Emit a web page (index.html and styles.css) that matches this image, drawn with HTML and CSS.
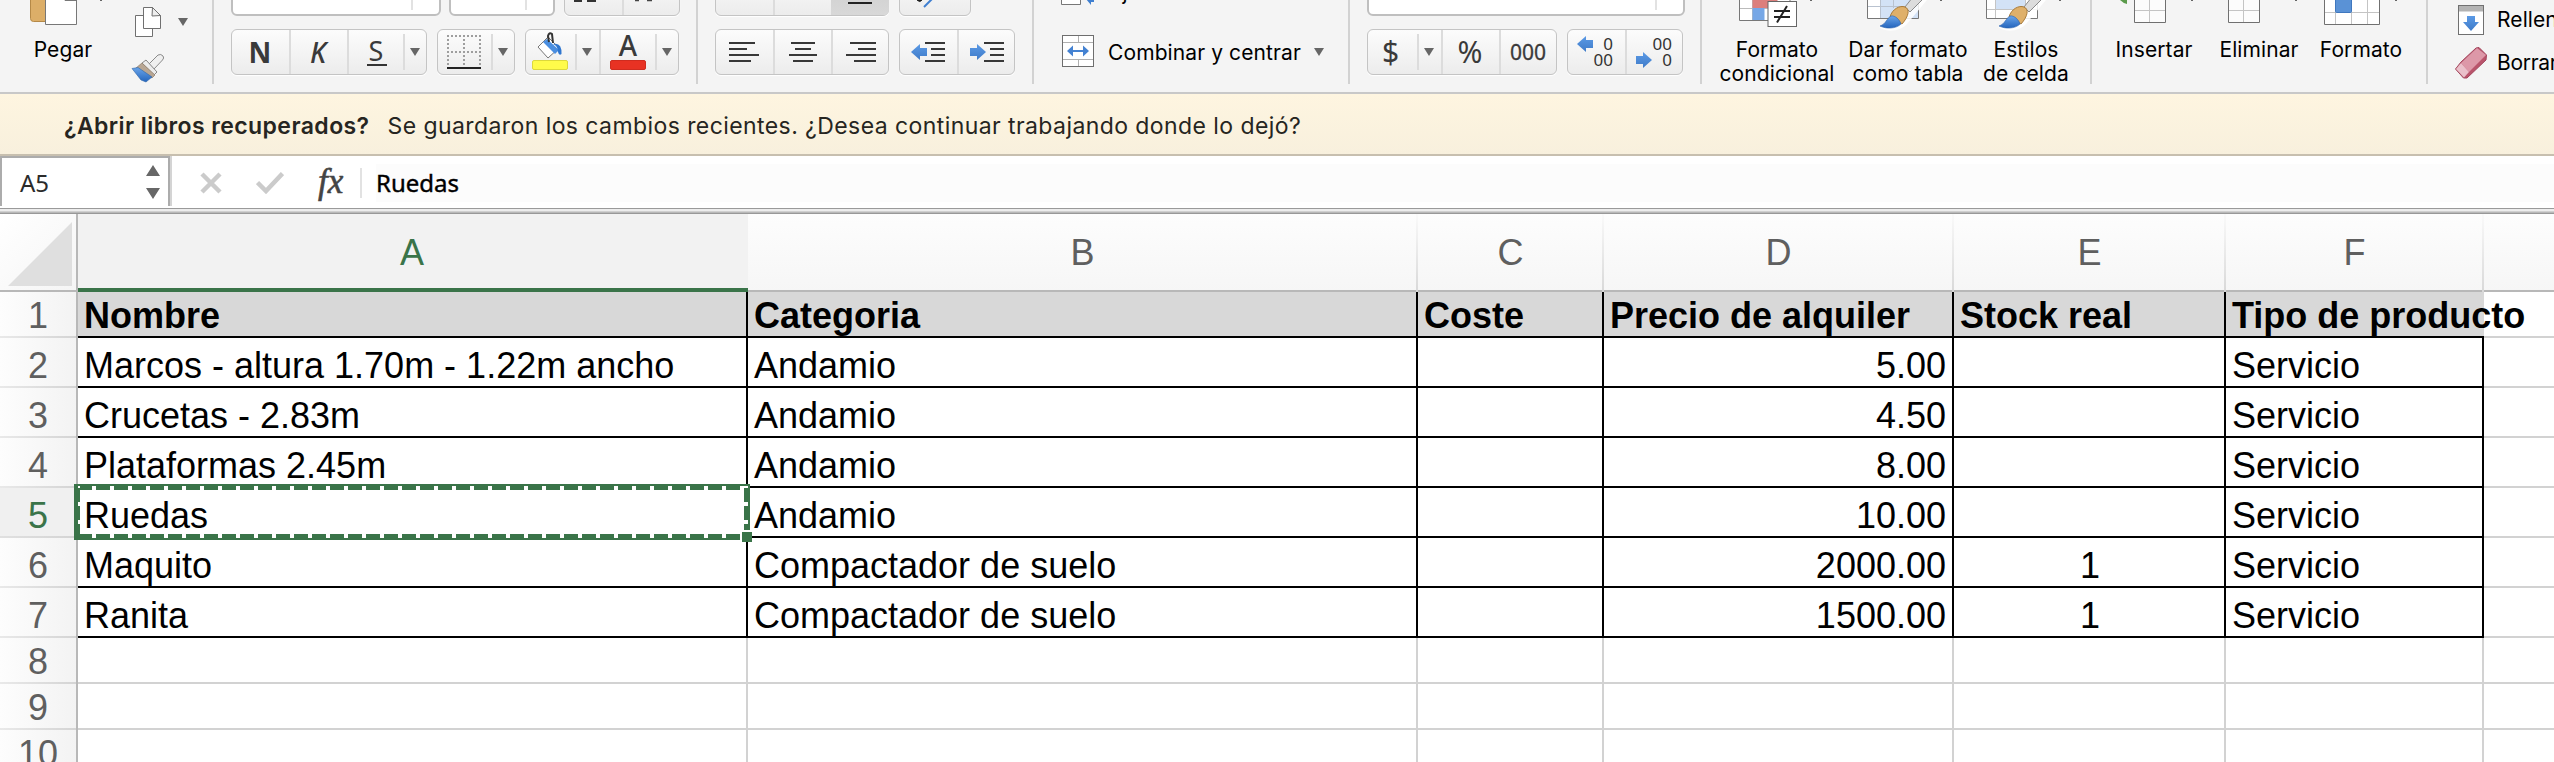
FILE: index.html
```html
<!DOCTYPE html>
<html lang="es">
<head>
<meta charset="utf-8">
<title>Inventario</title>
<link rel="stylesheet" href="styles.css">
</head>
<body>
<svg class="defs" width="0" height="0">
  <defs>
    <linearGradient id="tip" x1="0" y1="0" x2="0" y2="1"><stop offset="0" stop-color="#6aa5ea"/><stop offset="1" stop-color="#2465bd"/></linearGradient>
    <linearGradient id="arrow" x1="0" y1="0" x2="0" y2="1"><stop offset="0" stop-color="#5b9ae6"/><stop offset="1" stop-color="#3f7bc8"/></linearGradient>
    <g id="paint">
      <path d="M12 22 L44 -12 L52 -6 L27 24 C22 30 8 34 -1 27 Z" fill="#fff" opacity=".85"/>
      <path d="M25 7 L40 -12 L48 -6 L30 12 Z" fill="#dcdcdc" stroke="#8a8a8a" stroke-width="1"/>
      <path d="M10 17 C12 9 20 5 25 7 C30 9 29 16 22 24 Z" fill="#dfb06a" stroke="#a97b3a" stroke-width="1"/>
      <path d="M0 26 C6 24 7 18 11 16 C15 15 20 20 21 24 C16 29 6 29 0 26 Z" fill="url(#tip)" stroke="#2a62ad" stroke-width=".6"/>
    </g>
  </defs>
</svg>

<header class="ribbon">
  <section class="group group-clipboard">
    <div class="tall paste">
      <svg width="90" height="38" viewBox="18 0 90 38">
        <path d="M30.500 -6 H50 V21.500 H33.500 Q30.500 21.500 30.500 18.500 Z" fill="#dcae68" stroke="#b58947"/>
        <path d="M45.500 -6 H76.500 V24.500 H45.500 Z" fill="#fff" stroke="#777"/>
        <path d="M63 -2 L65 .5 H76.500" fill="none" stroke="#777"/>
        <path d="M100 0 h2 v1 h-2 z" fill="#666"/>
      </svg>
      <span class="label">Pegar</span>
    </div>
    <div class="clip-tools">
      <div class="clip-row">
        <svg width="28" height="32" viewBox="134 6 28 32">
          <path d="M135.500 15.500 H152.500 V36.500 H135.500 Z" fill="#fff" stroke="#707070"/>
          <path d="M143.500 7.500 H152.500 L160.500 15.500 V28.500 H143.500 Z" fill="#fff" stroke="#707070"/>
          <path d="M152.500 7.500 L152 16 L160.500 15.500 Z" fill="#eee" stroke="#707070"/>
        </svg>
        <svg class="caret" width="10" height="8" viewBox="0 0 10 8"><path d="M0 0H10L5 8Z"/></svg>
      </div>
      <svg width="34" height="30" viewBox="131 53 34 30">
        <path d="M149 64 L158 55 Q161 53.500 163 56 Q164.500 58 162.500 60 L154 69 Z" fill="#efefef" stroke="#8a8a8a"/>
        <path d="M146 60 L157 72 L154 75 L142 63 Z" fill="#ececec" stroke="#888"/>
        <path d="M142 63 L155 75 L152 78 L136 68 Z" fill="#b8a693" stroke="#8d7d6b" stroke-width=".7"/>
        <path d="M132 68.500 L138 67.500 L152 77 L146 82 L141 80 Z" fill="url(#tip)" stroke="#2e65a8" stroke-width=".6"/>
      </svg>
    </div>
  </section>

  <section class="group group-font">
    <div class="stack">
      <div class="row">
        <div class="combo w210"><i class="split at180"></i></div>
        <div class="combo w106 ml8"><i class="split at76"></i></div>
        <div class="seg ml9">
          <span class="btn w58"><svg width="56" height="44" viewBox="564 -29 56 44"><path d="M573 1 h8 M586 1 h9" stroke="#333" stroke-width="2"/></svg></span>
          <span class="btn w58"><svg width="56" height="44" viewBox="622 -29 56 44"><path d="M633 .5 h4 M645 .5 h5" stroke="#444" stroke-width="1.500"/></svg></span>
        </div>
      </div>
      <div class="row">
        <div class="seg">
          <span class="btn w58 glyph bold">N</span>
          <span class="btn w58 glyph italic">K</span>
          <span class="btn w56 glyph under">S</span>
          <span class="btn w24 drop"><svg class="caret" width="10" height="8" viewBox="0 0 10 8"><path d="M0 0H10L5 8Z"/></svg></span>
        </div>
        <div class="seg ml10">
          <span class="btn w54"><svg width="36" height="36" viewBox="448 34 36 36">
            <g fill="none" stroke="#9e9e9e" stroke-width="2" stroke-dasharray="2 2"><path d="M449 36 H483"/><path d="M449 52 H483"/><path d="M450 35 V66"/><path d="M466 35 V66"/><path d="M482 35 V66"/></g>
            <path d="M449 68 H483" stroke="#222" stroke-width="2"/></svg></span>
          <span class="btn w24 drop"><svg class="caret" width="10" height="8" viewBox="0 0 10 8"><path d="M0 0H10L5 8Z"/></svg></span>
        </div>
        <div class="seg ml10">
          <span class="btn w50"><svg width="40" height="42" viewBox="528 31 40 42">
            <path d="M536 47 L546 37 L557 48 L546 58 Z" fill="#fff" stroke="#777"/>
            <path d="M541 42 L545 39 L557 50 L553 54 Z" fill="#4a8ee0"/>
            <path d="M551 44 Q560 42 559.500 54 Q557 56 556 52 Q556 46 551 44Z" fill="#2f76cf"/>
            <path d="M547 42 L546 36 Q547 32 550 34 L551 43" fill="none" stroke="#333" stroke-width="2"/>
            <rect x="530.500" y="60.500" width="35" height="9" rx="1.500" fill="#fffb4a" stroke="#dcd83c"/></svg></span>
          <span class="btn w24 drop"><svg class="caret" width="10" height="8" viewBox="0 0 10 8"><path d="M0 0H10L5 8Z"/></svg></span>
          <span class="btn w56 fontcolor"><b>A</b><i></i></span>
          <span class="btn w24 drop"><svg class="caret" width="10" height="8" viewBox="0 0 10 8"><path d="M0 0H10L5 8Z"/></svg></span>
        </div>
      </div>
    </div>
  </section>

  <section class="group group-align">
    <div class="stack">
      <div class="row">
        <div class="seg"><span class="btn w58"></span><span class="btn w58"></span><span class="btn w58 pressed"><i></i></span></div>
        <div class="seg ml10"><span class="btn w72"><svg width="70" height="44" viewBox="900 -29 70 44"><path d="M917 0 q3 3 5 0z" fill="#222" stroke="#222"/><path d="M924 7 L933 -2" stroke="#3f7fd0" stroke-width="2"/></svg></span></div>
      </div>
      <div class="row">
        <div class="seg">
          <span class="btn w58"><svg width="30" height="22" viewBox="730 41 30 22"><path d="M730 43h26M730 49h18M730 55h30M730 61h22" stroke="#383838" stroke-width="2"/></svg></span>
          <span class="btn w58"><svg width="28" height="22" viewBox="788 41 28 22"><path d="M790 43h24M794 49h16M788 55h28M792 61h20" stroke="#383838" stroke-width="2"/></svg></span>
          <span class="btn w58"><svg width="30" height="22" viewBox="844 41 30 22"><path d="M848 43h26M856 49h18M844 55h30M852 61h22" stroke="#383838" stroke-width="2"/></svg></span>
        </div>
        <div class="seg ml10">
          <span class="btn w58"><svg width="34" height="22" viewBox="910 41 34 22"><path d="M910 52l9-8v4h7v8h-7v4z" fill="url(#arrow)"/><path d="M924 43h20M930 49h14M930 55h14M924 61h20" stroke="#383838" stroke-width="2"/></svg></span>
          <span class="btn w58"><svg width="34" height="22" viewBox="968 41 34 22"><path d="M984 52l-9-8v4h-7v8h7v4z" fill="url(#arrow)"/><path d="M982 43h20M988 49h14M988 55h14M982 61h20" stroke="#383838" stroke-width="2"/></svg></span>
        </div>
      </div>
    </div>
  </section>

  <section class="group group-merge">
    <div class="stack">
      <div class="row">
        <svg width="40" height="46" viewBox="1061 -30 40 46"><path d="M1061.500 -20H1080.500V4.500H1061.500Z" fill="#fff" stroke="#777"/><path d="M1086 -1 L1091 5 V2 H1094 V-2 H1091Z" fill="#3f7fd0"/></svg>
        <span class="label wrap">Ajustar texto</span>
      </div>
      <div class="row">
        <svg class="merge-icon" width="32" height="32" viewBox="0 0 32 32"><rect x=".5" y=".5" width="31" height="31" fill="#fff" stroke="#6e6e6e"/><path d="M1 7.500H31M1 24.500H31M16.500 1V7M16.500 25V31" stroke="#b0b0b0" fill="none"/><path d="M5 16l6-5.500v4.500h10v-4.500l6 5.500-6 5.500v-4.500h-10v4.500z" fill="#4482d2"/></svg>
        <span class="label merge-label">Combinar y centrar</span>
        <svg class="caret" width="10" height="8" viewBox="0 0 10 8"><path d="M0 0H10L5 8Z"/></svg>
      </div>
    </div>
  </section>

  <section class="group group-number">
    <div class="stack">
      <div class="row"><div class="combo w318"><i class="split at288"></i></div></div>
      <div class="row">
        <div class="seg">
          <span class="btn w50 glyph money">$</span>
          <span class="btn w24 drop"><svg class="caret" width="10" height="8" viewBox="0 0 10 8"><path d="M0 0H10L5 8Z"/></svg></span>
          <span class="btn w58 glyph pct">%</span>
          <span class="btn w58 glyph zeros">000</span>
        </div>
        <div class="seg ml10">
          <span class="btn w58 decimals"><svg width="16" height="16" viewBox="0 0 16 16"><path d="M0 8l9-8v4h7v8h-7v4z" fill="url(#arrow)"/></svg><em>0</em><em class="wide">00</em></span>
          <span class="btn w58 decimals"><em class="wide">00</em><svg width="16" height="16" viewBox="0 0 16 16"><path d="M16 8l-9-8v4h-7v8h7v4z" fill="url(#arrow)"/></svg><em>0</em></span>
        </div>
      </div>
    </div>
  </section>

  <section class="group group-styles">
    <div class="tall w124">
      <svg width="124" height="38" viewBox="1715 0 124 38">
        <path d="M1739.500 -5H1790V20.500H1739.500Z" fill="#fff" stroke="#777"/>
        <path d="M1740 8.500H1768M1752.500 0V20" stroke="#bbb"/>
        <rect x="1752.500" y="-2" width="25" height="10" fill="#dc7f7c"/><rect x="1752.500" y="8" width="12" height="12" fill="#76a7e6"/>
        <rect x="1768" y="1.500" width="28.500" height="25" fill="#fff" stroke="#666"/>
        <path d="M1774 11h16M1774 17h16M1777 22.500L1787 6" stroke="#222" stroke-width="2"/>
        <path d="M1810 0h2v1h-2z" fill="#666"/>
      </svg>
      <span class="label">Formato<br>condicional</span>
    </div>
    <div class="tall w126 ml6">
      <svg width="126" height="38" viewBox="1845 0 126 38">
        <path d="M1867.500 -5H1918.500V18.500H1867.500Z" fill="#fff" stroke="#777"/>
        <path d="M1880 0H1918V18H1880Z" fill="#d3e2f6"/>
        <path d="M1868 6.500H1918M1880.500 0V18M1893.500 0V8" stroke="#b9c2cf"/>
        <use href="#paint" x="1880" y="0"/>
        <path d="M1940 0h2v1h-2z" fill="#666"/>
      </svg>
      <span class="label">Dar formato<br>como tabla</span>
    </div>
    <div class="tall w100 ml5">
      <svg width="100" height="38" viewBox="1976 0 100 38">
        <path d="M1986.500 -5H2037.500V18.500H1986.500Z" fill="#fff" stroke="#777"/>
        <path d="M1995 -1H2025V9H1995Z" fill="#d3e2f6"/>
        <path d="M1987 9.500H2037M1995.500 0V18M2025.500 0V18" stroke="#c4c4c4"/>
        <use href="#paint" x="1999" y="0"/>
        <path d="M2059 0h2v1h-2z" fill="#666"/>
      </svg>
      <span class="label">Estilos<br>de celda</span>
    </div>
  </section>

  <section class="group group-cells">
    <div class="tall w96">
      <svg width="96" height="38" viewBox="2106 0 96 38">
        <path d="M2134.500 -5H2165.500V22.500H2134.500Z" fill="#fcfcfc" stroke="#707070"/><path d="M2135 10.500H2165M2149.500 0V22" stroke="#c4c4c4"/>
        <path d="M2120 0H2127V4Q2123 3 2120 0Z" fill="#5b9a4b"/><path d="M2191 0h2v1h-2z" fill="#666"/>
      </svg>
      <span class="label">Insertar</span>
    </div>
    <div class="tall w94 ml10">
      <svg width="94" height="38" viewBox="2212 0 94 38">
        <path d="M2228.500 -5H2259.500V22.500H2228.500Z" fill="#fcfcfc" stroke="#707070"/><path d="M2229 10.500H2259M2243.500 0V22" stroke="#c4c4c4"/>
        <path d="M2295 0h2v1h-2z" fill="#666"/>
      </svg>
      <span class="label">Eliminar</span>
    </div>
    <div class="tall w96 ml7">
      <svg width="96" height="38" viewBox="2313 0 96 38">
        <path d="M2324.500 -5H2379.500V24.500H2324.500Z" fill="#fff" stroke="#707070"/><path d="M2325 12.500H2379M2335.500 0V24M2351.500 0V24M2367.500 0V24" stroke="#c4c4c4"/>
        <rect x="2335.500" y="-4" width="16" height="16.500" rx="1" fill="#5a92d6" stroke="#3f77be"/><path d="M2395 0h2v1h-2z" fill="#666"/>
      </svg>
      <span class="label">Formato</span>
    </div>
  </section>

  <section class="group group-edit">
    <div class="edit-row">
      <svg width="34" height="32" viewBox="2454 6 34 32"><rect x="2458.500" y="7.500" width="25" height="29" fill="#fff" stroke="#707070"/><rect x="2459" y="8" width="24" height="5.500" fill="#b3b3b3"/><path d="M2467 18h8v6h4l-8 9-8-9h4z" fill="url(#arrow)"/></svg>
      <span class="label">Rellenar</span>
    </div>
    <div class="edit-row">
      <svg width="34" height="34" viewBox="2454 51 34 34"><path d="M2455.500 74 L2461 67 L2476 53 L2479 52.500 L2486.500 60 L2486 65 L2467 83 L2463.500 83 Z" fill="#b9546b" stroke="#a3465d"/><path d="M2461 68L2477 53L2486 60L2469 77Z" fill="#dd98a8"/><path d="M2456 74L2461 68L2469 77L2464 82.500Z" fill="#eac0ca"/></svg>
      <span class="label tight">Borrar</span>
    </div>
  </section>
</header>

<div class="message"><strong>¿Abrir libros recuperados?</strong><span>Se guardaron los cambios recientes. ¿Desea continuar trabajando donde lo dejó?</span></div>

<div class="formula-bar">
  <div class="name-box"><span>A5</span>
    <svg width="14" height="34" viewBox="0 0 14 34"><path d="M7 0L14 11H0ZM7 34L0 23H14Z" fill="#676767"/></svg>
  </div>
  <div class="formula-tools">
    <svg width="22" height="22" viewBox="0 0 22 22"><path d="M2 2L20 20M20 2L2 20" stroke="#cbcbcb" stroke-width="4.500"/></svg>
    <svg class="check" width="28" height="22" viewBox="0 0 28 22"><path d="M1.500 10.500L10 19L26.500 1.500" fill="none" stroke="#cbcbcb" stroke-width="4.500"/></svg>
    <span class="fx">fx</span>
  </div>
  <div class="formula-text"><span>Ruedas</span></div>
</div>
<div class="bar-edge"></div>

<main class="sheet">
  <div class="line heads">
    <div class="corner"><svg width="64" height="64" viewBox="0 0 64 64"><path d="M64 0V64H0Z" fill="#dfdfdf"/></svg></div>
    <div class="head active">A</div><div class="head">B</div><div class="head">C</div><div class="head">D</div><div class="head">E</div><div class="head">F</div><div class="head last"></div>
  </div>
  <div class="line title"><div class="num">1</div><div class="c">Nombre</div><div class="c">Categoria</div><div class="c">Coste</div><div class="c">Precio de alquiler</div><div class="c">Stock real</div><div class="c spill">Tipo de producto</div><div class="g"></div></div>
  <div class="line data"><div class="num">2</div><div class="c">Marcos - altura 1.70m - 1.22m ancho</div><div class="c">Andamio</div><div class="c"></div><div class="c right">5.00</div><div class="c"></div><div class="c">Servicio</div><div class="g"></div></div>
  <div class="line data"><div class="num">3</div><div class="c">Crucetas - 2.83m</div><div class="c">Andamio</div><div class="c"></div><div class="c right">4.50</div><div class="c"></div><div class="c">Servicio</div><div class="g"></div></div>
  <div class="line data"><div class="num">4</div><div class="c">Plataformas 2.45m</div><div class="c">Andamio</div><div class="c"></div><div class="c right">8.00</div><div class="c"></div><div class="c">Servicio</div><div class="g"></div></div>
  <div class="line data"><div class="num current">5</div><div class="c selected">Ruedas
      <svg class="marquee" width="678" height="58" viewBox="74 484 678 58">
        <rect x="77" y="487" width="670" height="50" fill="none" stroke="#3a7449" stroke-width="6"/>
        <path d="M92 488H744" stroke="#fff" stroke-width="4" stroke-dasharray="4 14"/>
        <path d="M92 536H740" stroke="#fff" stroke-width="4" stroke-dasharray="4 14"/>
        <path d="M79 502V530M79 486V488" stroke="#fff" stroke-width="2" stroke-dasharray="4 14"/>
        <path d="M746 502V530M746 486V488" stroke="#fff" stroke-width="4" stroke-dasharray="4 14"/>
        <rect x="740" y="530" width="12" height="12" fill="#fff"/><rect x="742" y="532" width="10" height="10" fill="#3a7449"/>
      </svg></div><div class="c">Andamio</div><div class="c"></div><div class="c right">10.00</div><div class="c"></div><div class="c">Servicio</div><div class="g"></div></div>
  <div class="line data"><div class="num">6</div><div class="c">Maquito</div><div class="c">Compactador de suelo</div><div class="c"></div><div class="c right">2000.00</div><div class="c mid">1</div><div class="c">Servicio</div><div class="g"></div></div>
  <div class="line data"><div class="num">7</div><div class="c">Ranita</div><div class="c">Compactador de suelo</div><div class="c"></div><div class="c right">1500.00</div><div class="c mid">1</div><div class="c">Servicio</div><div class="g"></div></div>
  <div class="line"><div class="num">8</div><div class="g"></div><div class="g"></div><div class="g"></div><div class="g"></div><div class="g"></div><div class="g"></div><div class="g"></div></div>
  <div class="line"><div class="num">9</div><div class="g"></div><div class="g"></div><div class="g"></div><div class="g"></div><div class="g"></div><div class="g"></div><div class="g"></div></div>
  <div class="line"><div class="num">10</div><div class="g"></div><div class="g"></div><div class="g"></div><div class="g"></div><div class="g"></div><div class="g"></div><div class="g"></div></div>
</main>
</body>
</html>
```
FILE: styles.css
```css
* { box-sizing: border-box; }
body {
  margin: 0;
  width: 2554px;
  height: 762px;
  overflow: hidden;
  background: #fff;
  color: #000;
  font-family: Inter, "Liberation Sans", sans-serif;
}
svg { display: block; flex: none; }
.defs { position: absolute; }

/* Ribbon */
.ribbon {
  display: flex;
  height: 94px;
  overflow: hidden;
  background: #f4f4f4;
  border-bottom: 2px solid #c8c8c8;
}
.group {
  display: flex;
  flex: none;
  height: 84px;
  border-right: 2px solid #d2d2d2;
}
.group-clipboard { width: 214px; padding-left: 18px; }
.group-font { width: 484px; padding-left: 17px; }
.group-align { width: 336px; padding-left: 17px; }
.group-merge { width: 316px; padding-left: 27px; }
.group-number { width: 352px; padding-left: 17px; }
.group-styles { width: 390px; padding-left: 13px; }
.group-cells { width: 336px; padding-left: 14px; }
.group-edit { width: 126px; padding-left: 26px; border-right: 0; flex-direction: column; }

.stack { display: flex; flex-direction: column; gap: 13px; margin-top: -30px; }
.row { display: flex; align-items: center; height: 46px; flex: none; }
.tall { display: flex; flex-direction: column; align-items: center; flex: none; }
.label { font-size: 21px; line-height: 24px; letter-spacing: .1px; text-align: center; white-space: nowrap; }
.tight { letter-spacing: -.3px; }
.paste { width: 90px; }
.clip-tools { display: flex; flex-direction: column; margin-left: 23px; padding-top: 6px; gap: 15px; }
.clip-row { display: flex; align-items: center; gap: 16px; padding-left: 3px; }
.caret { fill: #666; }

.combo {
  display: flex;
  height: 46px;
  background: #fff;
  border: 2px solid #bfbfbf;
  border-radius: 6px;
}
.split { width: 2px; height: 38px; background: #e2e2e2; }
.at180 { margin-left: 178px; }
.at76 { margin-left: 74px; }
.at288 { margin-left: 286px; }

.seg {
  display: flex;
  height: 46px;
  border: 1.500px solid #c4c4c4;
  border-radius: 6px;
  background: linear-gradient(#fcfcfc, #ececec);
  box-shadow: 0 1px 1px #fff;
}
.btn {
  position: relative;
  display: flex;
  align-items: center;
  justify-content: center;
  flex: none;
  border-left: 2px solid #dcdcdc;
}
.btn:first-child { border-left: 0; margin-left: -1px; }
.btn:last-child { margin-right: -1px; }
.drop { border-left: 0; background: linear-gradient(#dcdcdc, #dcdcdc) 0 50% / 2px 36px no-repeat; }
.pressed { background: linear-gradient(#ccc, #d8d8d8); border-radius: 0 5px 5px 0; align-items: flex-end; border-left: 0; }
.pressed i { width: 24px; height: 2px; margin-bottom: 11px; background: #222; }

.w24 { width: 24px; } .w50 { width: 50px; } .w54 { width: 54px; }
.w56 { width: 56px; } .w58 { width: 58px; } .w72 { width: 72px; }
.w94 { width: 94px; } .w96 { width: 96px; } .w100 { width: 100px; }
.w106 { width: 106px; } .w124 { width: 124px; } .w126 { width: 126px; }
.w210 { width: 210px; } .w318 { width: 318px; }
.ml5 { margin-left: 5px; } .ml6 { margin-left: 6px; } .ml7 { margin-left: 7px; }
.ml8 { margin-left: 8px; } .ml9 { margin-left: 9px; } .ml10 { margin-left: 10px; }

.glyph { font-family: "Noto Sans", sans-serif; font-size: 28px; line-height: 40px; color: #3a3a3a; }
.bold { font-weight: 700; }
.italic { font-style: italic; font-weight: 500; padding-right: 2px; }
.under { font-size: 27px; padding-bottom: 3px; }
.under::after { content: ""; position: absolute; left: 18px; bottom: 8px; width: 20px; height: 2px; background: #333; }
.money { font-size: 30px; padding-right: 3px; }
.pct { font-size: 30px; padding-right: 2px; }
.zeros { font-size: 21px; padding: 0 2px 1px 0; -webkit-text-stroke: .3px #3a3a3a; }
.decimals {
  display: grid;
  grid-template-columns: 16px 20px;
  grid-auto-rows: 16px;
  align-content: center;
  align-items: center;
  padding-right: 2px;
  font: 17px/16px "Noto Sans", sans-serif;
  color: #333;
}
.decimals em { font-style: normal; text-align: right; }
.decimals .wide { grid-column: 1 / 3; }
.fontcolor { flex-direction: column; justify-content: flex-start; font-family: "Noto Sans", sans-serif; font-size: 28px; color: #3a3a3a; }
.fontcolor b { font-weight: 500; line-height: 30px; }
.fontcolor i { width: 36px; height: 10px; border-radius: 2px; background: #e83223; border: 1px solid #cf2c1f; }

.merge-icon { margin: -2px 0 0 1px; }
.merge-label { margin: 2px 13px 0 14px; }
.wrap { margin-left: 7px; }

.edit-row { display: flex; align-items: center; gap: 9px; height: 46px; }
.edit-row:first-child { margin-top: -1px; }

/* Recovery message */
.message {
  display: flex;
  align-items: center;
  gap: 18px;
  height: 62px;
  padding: 3px 0 0 64px;
  background: linear-gradient(#fef5e0, #f8f0dd);
  border-bottom: 2px solid #c7bfaf;
  color: #262521;
  font-size: 23px;
  letter-spacing: .42px;
  white-space: nowrap;
}
.message strong { font-weight: 600; }

/* Formula bar */
.formula-bar { display: flex; height: 52px; background: #fff; font-family: "Noto Sans", sans-serif; font-size: 24px; }
.name-box {
  display: flex;
  align-items: center;
  justify-content: space-between;
  width: 170px;
  height: 50px;
  padding: 0 8px 0 18px;
  border: 2px solid #acacac;
  border-bottom: 0;
  box-shadow: 2px 0 #d4d4d4;
  color: #2b2b2b;
}
.formula-tools { display: flex; align-items: center; width: 192px; height: 30px; margin-top: 12px; padding-left: 30px; border-right: 2px solid #e2e2e2; }
.check { margin-left: 34px; }
.fx { margin: -3px 0 0 34px; font: italic 35px/30px "Liberation Serif", serif; color: #444; -webkit-text-stroke: .6px #444; }
.formula-text { flex: 1; margin: 8px 0 6px 14px; background: #fcfcfc; line-height: 38px; -webkit-text-stroke: .4px #000; }
.bar-edge { height: 6px; background: linear-gradient(#9a9a9a 0 1px, #ededed 1px 3px, #d0d0d0 3px 4px, #b8b8b8 4px 5px, #989898 5px); }

/* Sheet */
.sheet { display: flex; flex-direction: column; font-family: "Liberation Sans", Arial, sans-serif; font-size: 36px; line-height: 40px; }
.line { display: grid; flex: none; grid-template-columns: 78px 670px 670px 186px 350px 272px 258px 70px; height: 46px; }
.heads { height: 78px; }
.data { height: 50px; }
.corner {
  display: flex;
  justify-content: flex-end;
  align-items: flex-end;
  padding: 0 4px 4px 0;
  background: linear-gradient(135deg, #fff, #f5f5f5);
  border-right: 2px solid #b8b8b8;
  border-bottom: 2px solid #b8b8b8;
}
.head {
  padding: 19px 0 0 1px;
  background: linear-gradient(#fdfdfd, #f6f6f6);
  border-right: 2px solid;
  border-image: linear-gradient(#fafafa, #d8d8d8) 0 2 0 0;
  color: #5f5f5f;
  text-align: center;
  box-shadow: inset 0 -2px #b8b8b8;
}
.head.last { border-right: 0; }
.head.active { padding: 19px 2px 0 0; background: #f2f2f2; color: #3a7449; box-shadow: inset 0 -4px #3a7449; border-right: 0; }
.num {
  display: flex;
  align-items: flex-end;
  justify-content: center;
  padding-bottom: 2px;
  background: linear-gradient(90deg, #e9e9e9, #d4d4d4) 0 100% / 100% 2px no-repeat, linear-gradient(90deg, #fdfdfd, #f3f3f3);
  border-right: 2px solid #b8b8b8;
  color: #5f5f5f;
}
.num.current { background-image: linear-gradient(90deg, #e0e0e0, #d4d4d4), linear-gradient(#f0f0f0, #f0f0f0); color: #3a7449; }
.c, .g { display: flex; align-items: flex-end; padding: 0 6px; white-space: nowrap; }
.c { position: relative; border-right: 2px solid #000; border-bottom: 2px solid #000; }
.g { border-right: 2px solid #d2d2d2; border-bottom: 2px solid #d2d2d2; }
.g:last-child { border-right: 0; }
.title .c { background: #d8d8d8; font-weight: 700; }
.title .spill { border-right: 0; z-index: 1; }
.right { justify-content: flex-end; }
.mid { justify-content: center; padding-left: 8px; }
.marquee { position: absolute; left: -4px; top: -4px; z-index: 2; }
```
